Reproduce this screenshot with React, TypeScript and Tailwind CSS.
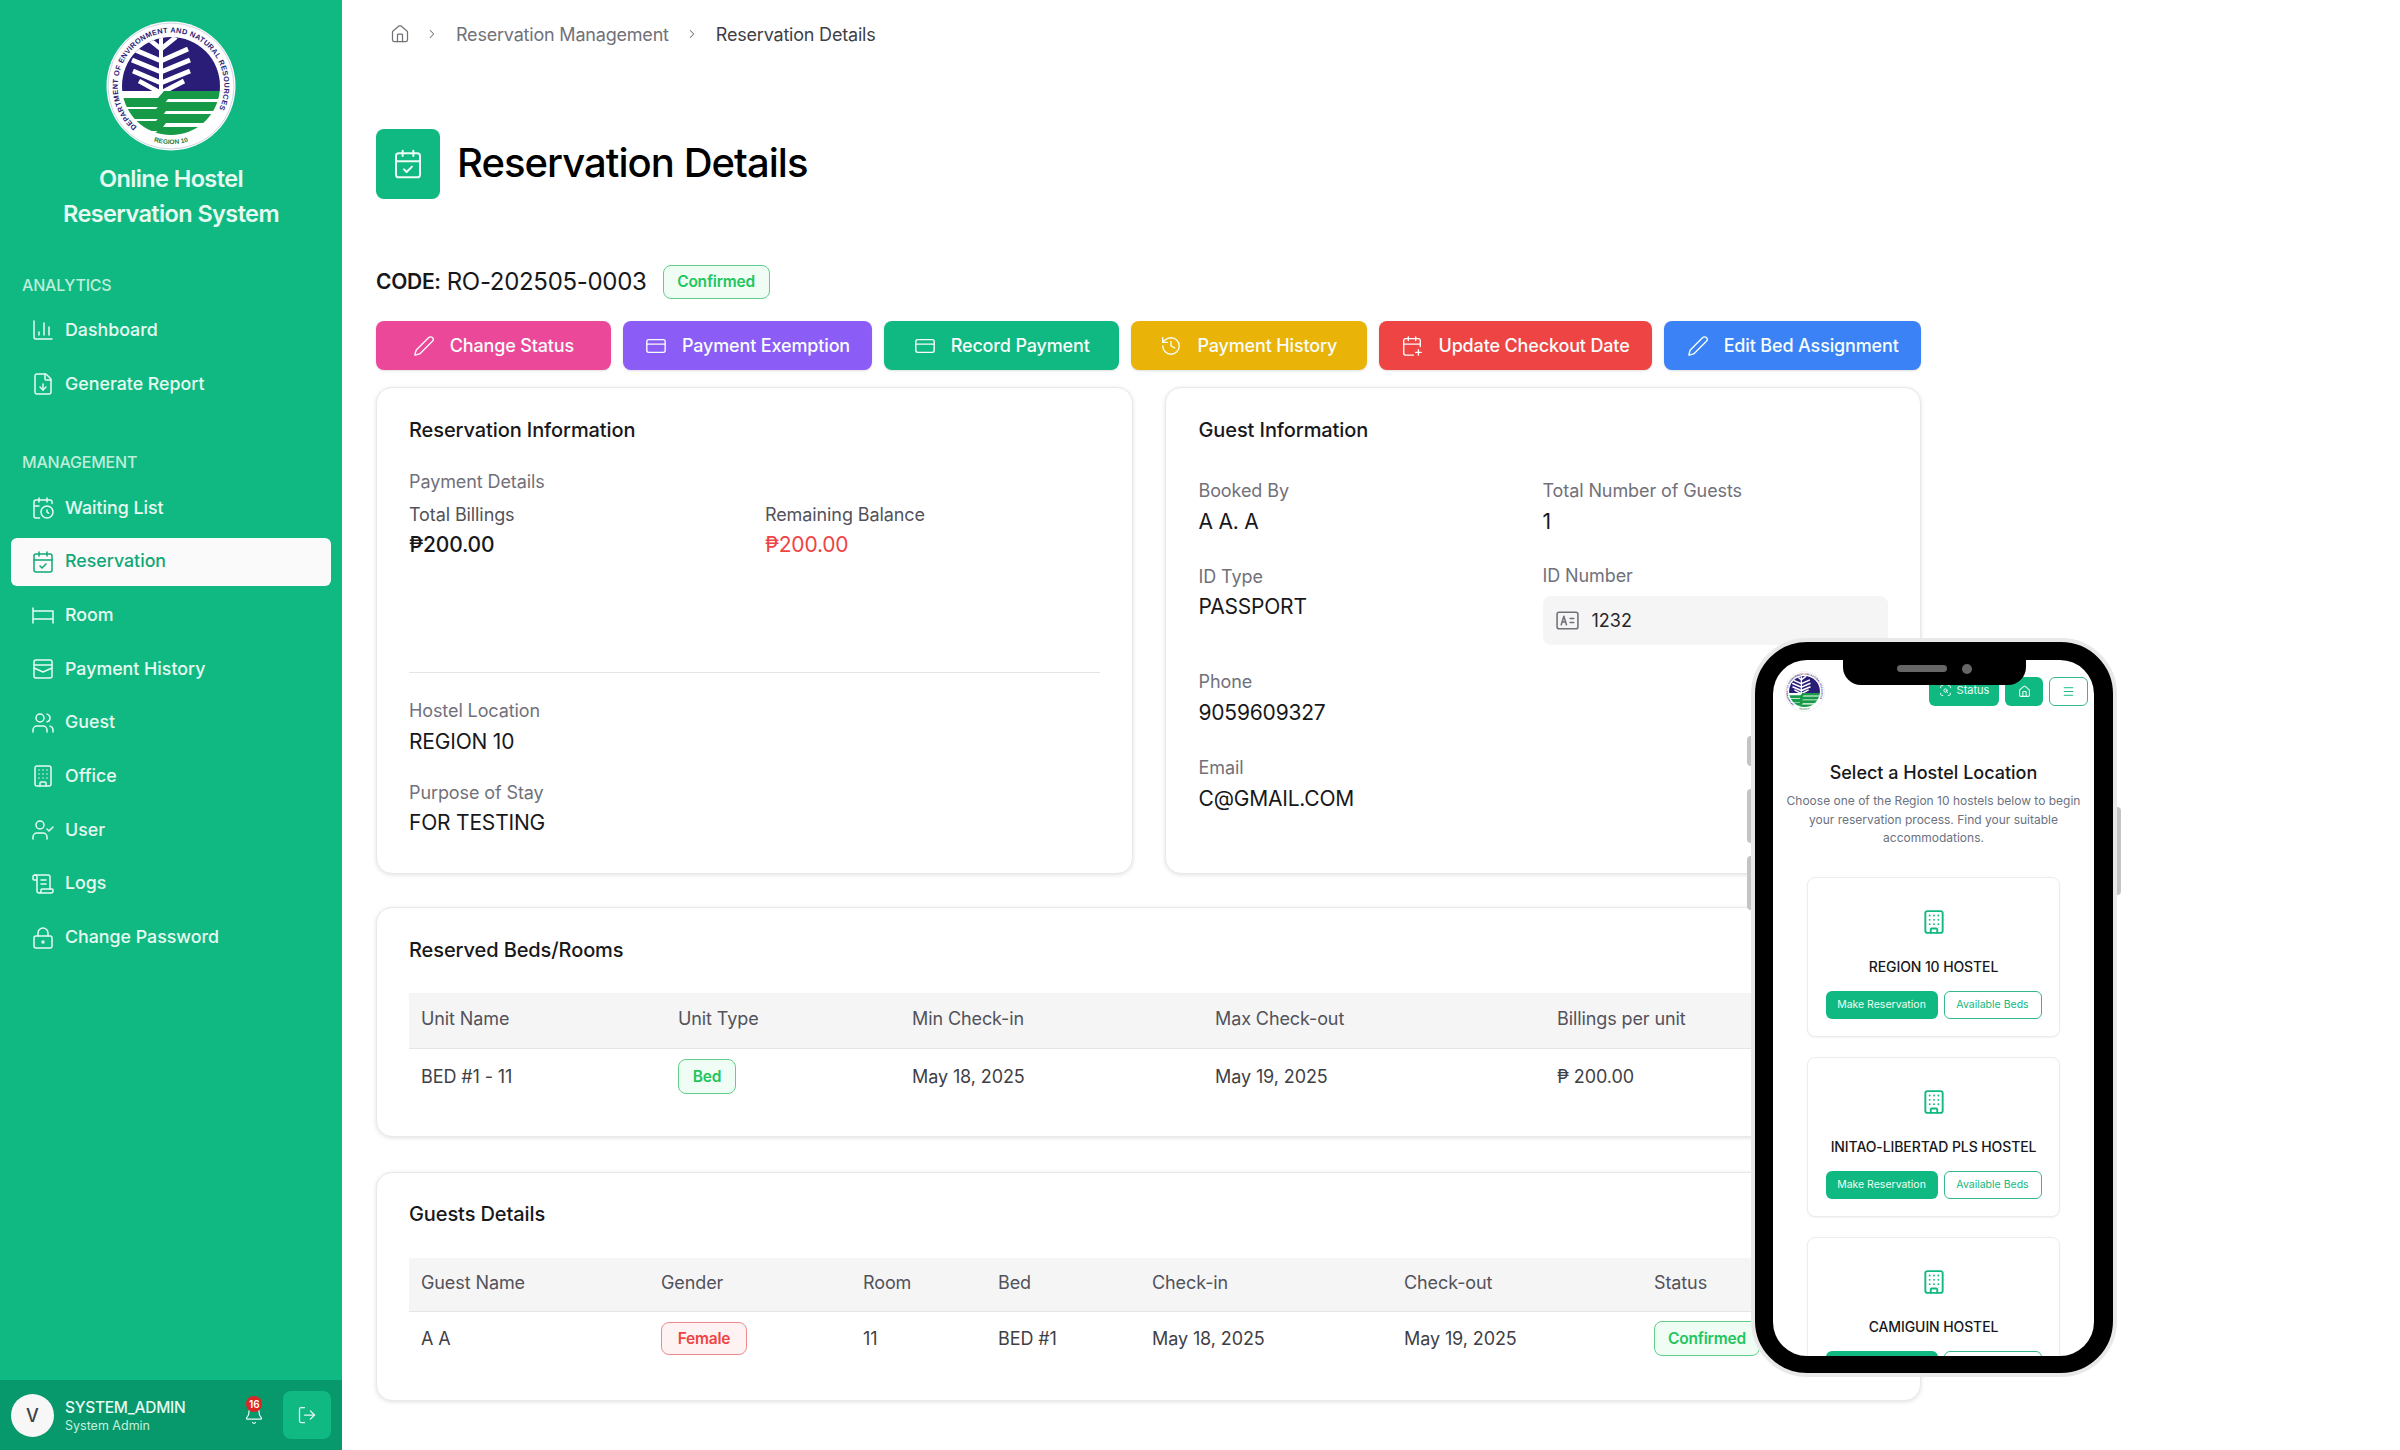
import React from "react";
import {
  ChartColumn, FileDown, CalendarClock, CalendarCheck, Users, Building, UserCheck, ScrollText, LockKeyhole,
  Bell, LogOut, House, ChevronRight, Pen, CreditCard, History, CalendarPlus, ScanSearch, Menu,
} from "lucide-react";

function Logo({ className, id }: { className: string; id: string }) {
  const bands = [
    "M10 77H52L58 70H120V78H62L56 86H10Z",
    "M10 88H50L56 81H120V90H60L54 98H10Z",
    "M10 100H50L56 93H120V102H60L54 110H10Z",
    "M40 120L56 106H120V116H62L52 124Z",
  ];
  const chevrons = [
    { j: 28, l: 40, r: 70 },
    { j: 40, l: 27, r: 82 },
    { j: 51, l: 26, r: 84 },
    { j: 62, l: 27, r: 84 },
    { j: 72, l: 33, r: 78 },
  ];
  return (
    <svg viewBox="0 0 130 130" className={className}>
      <defs>
        <clipPath id={`${id}-c`}><circle cx="65" cy="65" r="49" /></clipPath>
        <path id={`${id}-t`} d="M31 106A53.300 53.300 0 1 1 99 106" />
        <path id={`${id}-b`} d="M37 116A59 59 0 0 0 93 116" />
      </defs>
      <circle cx="65" cy="65" r="64.500" fill="#ffffff" />
      <circle cx="65" cy="65" r="63" fill="none" stroke="#cfd3e6" strokeWidth="1" />
      <text fontSize="7.400" fontWeight="700" fill="#2a1d78" fontFamily="Liberation Sans, sans-serif" letterSpacing="0.3">
        <textPath href={`#${id}-t`} startOffset="0">DEPARTMENT OF ENVIRONMENT AND NATURAL RESOURCES</textPath>
      </text>
      <text fontSize="6.500" fontWeight="700" fill="#1a7a3c" fontFamily="Liberation Sans, sans-serif" textAnchor="middle">
        <textPath href={`#${id}-b`} startOffset="50%">REGION 10</textPath>
      </text>
      <g clipPath={`url(#${id}-c)`}>
        <rect x="0" y="0" width="130" height="70" fill="#2a1d78" />
        <g stroke="#ffffff" strokeWidth="4.800" fill="none">
          {chevrons.map((c) => (
            <path key={c.j} d={`M${c.l} ${c.j - 12}L55 ${c.j}L${c.r} ${c.j - 12}`} />
          ))}
          <path d="M55 12V72" strokeWidth="4" />
        </g>
        <rect x="0" y="70" width="130" height="60" fill="#ffffff" />
        {bands.map((d) => <path key={d} d={d} fill="#169a48" />)}
      </g>
    </svg>
  );
}

function BedIcon({ className }: { className?: string }) {
  return (
    <svg viewBox="0 0 24 24" fill="none" stroke="currentColor" strokeWidth="1.5" strokeLinecap="round" strokeLinejoin="round" className={className}>
      <path d="M2 5v15M2 8h20v12M2 16h20" />
    </svg>
  );
}

function PayIcon({ className }: { className?: string }) {
  return (
    <svg viewBox="0 0 24 24" fill="none" stroke="currentColor" strokeWidth="1.5" strokeLinecap="round" strokeLinejoin="round" className={className}>
      <rect x="3" y="3" width="18" height="18" rx="2" />
      <path d="M3 8h18M3 11l9 4 9-4" />
    </svg>
  );
}

function IdIcon({ className }: { className?: string }) {
  return (
    <svg viewBox="0 0 24 24" fill="none" stroke="currentColor" strokeWidth="1.5" strokeLinecap="round" strokeLinejoin="round" className={className}>
      <rect x="2" y="4" width="20" height="16" rx="2" />
      <path d="M6 16l2.500-8 2.500 8M7 13.500h3M14.500 10H18M14.500 14H18" />
    </svg>
  );
}

const analytics = [
  { label: "Dashboard", Icon: ChartColumn },
  { label: "Generate Report", Icon: FileDown },
];
const management = [
  { label: "Waiting List", Icon: CalendarClock },
  { label: "Reservation", Icon: CalendarCheck, active: true },
  { label: "Room", Icon: BedIcon },
  { label: "Payment History", Icon: PayIcon },
  { label: "Guest", Icon: Users },
  { label: "Office", Icon: Building },
  { label: "User", Icon: UserCheck },
  { label: "Logs", Icon: ScrollText },
  { label: "Change Password", Icon: LockKeyhole },
];

function NavItem({ label, Icon, active }: { label: string; Icon: any; active?: boolean }) {
  return (
    <div className={`flex h-12 items-center gap-[10px] rounded-md pl-[20px] text-[17.800px] font-medium ${active ? "bg-[#fafafa] text-[#10a877]" : "text-[#e6faf2]"}`}>
      <Icon className="size-[24px]" strokeWidth={1.5} />
      <span>{label}</span>
    </div>
  );
}

function Sidebar() {
  return (
    <aside className="flex h-full w-[342px] shrink-0 flex-col bg-[#10b981]">
      <div className="flex flex-1 flex-col px-[11px]">
        <Logo id="side" className="mx-auto mt-[21px] size-[130px]" />
        <div className="mt-[10px] text-center text-[23.500px] font-semibold leading-[35px] tracking-[-0.6px] text-[#e6faf2]">
          Online Hostel<br />Reservation System
        </div>
        <div className="mt-[44px] pl-[11px] text-[16px] font-medium leading-[20px] tracking-[-0.2px] text-[#bdeedb]">ANALYTICS</div>
        <div className="mt-[11px] flex flex-col gap-[6px]">
          {analytics.map((n) => <NavItem key={n.label} {...n} />)}
        </div>
        <div className="mt-[44px] pl-[11px] text-[16px] font-medium leading-[20px] tracking-[-0.2px] text-[#bdeedb]">MANAGEMENT</div>
        <div className="mt-[12px] flex flex-col gap-[5.700px]">
          {management.map((n) => <NavItem key={n.label} {...n} />)}
        </div>
      </div>
      <div className="flex h-[70px] items-center bg-[#07986c] pl-[11px] pr-[11px]">
        <div className="flex size-[43px] items-center justify-center rounded-full bg-[#f7f7f7] text-[18px] font-medium text-[#3f3f46]">V</div>
        <div className="ml-[11px] flex flex-col">
          <span className="text-[15.500px] font-medium leading-[20px] tracking-[-0.3px] text-[#e6faf2]">SYSTEM_ADMIN</span>
          <span className="text-[12.500px] leading-[15px] text-[#c5f0df]">System Admin</span>
        </div>
        <div className="relative ml-[59px] text-[#e6faf2]">
          <Bell className="size-[20px]" strokeWidth={1.5} />
          <span className="absolute -top-[9px] left-[2px] flex size-[16px] items-center justify-center rounded-full bg-[#dc2626] text-[10px] font-semibold text-white">16</span>
        </div>
        <div className="ml-auto flex size-[48px] items-center justify-center rounded-lg bg-[#10b981] text-[#e6faf2]">
          <LogOut className="size-[20px]" strokeWidth={1.5} />
        </div>
      </div>
    </aside>
  );
}

const actions = [
  { label: "Change Status", Icon: Pen, cls: "bg-[#ec4899] w-[235px]" },
  { label: "Payment Exemption", Icon: CreditCard, cls: "bg-[#8b5cf6] w-[250px]" },
  { label: "Record Payment", Icon: CreditCard, cls: "bg-[#10b981] w-[235px]" },
  { label: "Payment History", Icon: History, cls: "bg-[#eab308] w-[236px]" },
  { label: "Update Checkout Date", Icon: CalendarPlus, cls: "bg-[#ef4444] w-[274px]" },
  { label: "Edit Bed Assignment", Icon: Pen, cls: "bg-[#3b82f6] w-[257px]" },
];

function Badge({ children, tone, className }: { children: React.ReactNode; tone: "green" | "red"; className: string }) {
  const c = tone === "green" ? "border-[#5fcf8a] bg-[#f0fdf4] text-[#22c55e]" : "border-[#f08a8a] bg-[#fef2f2] text-[#ef4444]";
  return <span className={`inline-flex items-center justify-center rounded-lg border text-[15.500px] font-semibold tracking-[-0.2px] ${c} ${className}`}>{children}</span>;
}

function Label({ children, className = "" }: { children: React.ReactNode; className?: string }) {
  return <div className={`text-[18px] leading-[24px] tracking-[-0.1px] text-[#52525b] ${className}`}>{children}</div>;
}
function Value({ children, className = "" }: { children: React.ReactNode; className?: string }) {
  return <div className={`text-[21px] leading-[30px] tracking-[-0.2px] text-[#18181b] ${className}`}>{children}</div>;
}
function CardTitle({ children }: { children: React.ReactNode }) {
  return <h2 className="text-[20px] font-medium leading-[28px] tracking-[-0.1px] text-[#18181b]">{children}</h2>;
}
const card = "rounded-2xl border border-[#e9e9e9] bg-white shadow-[0_1px_4px_rgba(0,0,0,0.12)]";
const th = "text-left font-normal text-[18px] tracking-[-0.1px] text-[#52525b] pl-[12px] pb-[3px]";
const td = "text-left font-normal text-[18px] tracking-[-0.1px] text-[#3f3f46] pl-[12px]";

function ReservationCard() {
  return (
    <section className={`${card} flex flex-col px-[32px] pt-[28px]`}>
      <CardTitle>Reservation Information</CardTitle>
      <Label className="mt-[26px] !text-[#71717a]">Payment Details</Label>
      <div className="mt-[9px] grid w-[712px] grid-cols-[356px_1fr]">
        <div>
          <Label>Total Billings</Label>
          <Value className="mt-[3px] font-medium">₱200.00</Value>
        </div>
        <div>
          <Label>Remaining Balance</Label>
          <Value className="mt-[3px] !text-[#ef4444]">₱200.00</Value>
        </div>
      </div>
      <div className="mt-[112px] h-px bg-[#e5e5e5]" />
      <Label className="mt-[26px] !text-[#71717a]">Hostel Location</Label>
      <Value className="mt-[4px]">REGION 10</Value>
      <Label className="mt-[24px] !text-[#71717a]">Purpose of Stay</Label>
      <Value className="mt-[3px]">FOR TESTING</Value>
    </section>
  );
}

function GuestCard() {
  return (
    <section className={`${card} pl-[33px] pr-[32px] pt-[28px]`}>
      <CardTitle>Guest Information</CardTitle>
      <div className="mt-[35px] grid grid-cols-[344px_1fr]">
        <div>
          <Label className="!text-[#71717a]">Booked By</Label>
          <Value className="mt-[4px]">A A. A</Value>
        </div>
        <div>
          <Label className="!text-[#71717a]">Total Number of Guests</Label>
          <Value className="mt-[4px]">1</Value>
        </div>
        <div className="mt-[28px]">
          <Label className="!text-[#71717a]">ID Type</Label>
          <Value className="mt-[3px]">PASSPORT</Value>
        </div>
        <div className="mt-[27px]">
          <Label className="!text-[#71717a]">ID Number</Label>
          <div className="mt-[8px] flex h-[49px] items-center gap-[12px] rounded-lg bg-[#f5f5f5] pl-[12px] text-[18px] text-[#27272a]">
            <IdIcon className="size-[25px] text-[#71717a]" />
            <span>1232</span>
          </div>
        </div>
        <div className="col-span-2 mt-[25px]">
          <Label className="!text-[#71717a]">Phone</Label>
          <Value className="mt-[4px]">9059609327</Value>
        </div>
        <div className="col-span-2 mt-[28px]">
          <Label className="!text-[#71717a]">Email</Label>
          <Value className="mt-[4px]">C@GMAIL.COM</Value>
        </div>
      </div>
    </section>
  );
}

function ReservedCard() {
  const widths = ["w-[257px]", "w-[234px]", "w-[303px]", "w-[342px]", "w-[343px]"];
  return (
    <section className={`${card} mt-[33px] h-[230px] px-[32px] pt-[28px]`}>
      <CardTitle>Reserved Beds/Rooms</CardTitle>
      <table className="mt-[29px] w-full table-fixed border-collapse">
        <colgroup>{widths.map((w) => <col key={w} className={w} />)}</colgroup>
        <thead>
          <tr className="h-[55px] border-b border-[#e5e5e5] bg-[#f5f5f5]">
            {["Unit Name", "Unit Type", "Min Check-in", "Max Check-out", "Billings per unit"].map((h) => <th key={h} className={th}>{h}</th>)}
          </tr>
        </thead>
        <tbody>
          <tr className="h-[57px]">
            <td className={td}>BED #1 - 11</td>
            <td className={td}><Badge tone="green" className="h-[35px] w-[58px]">Bed</Badge></td>
            <td className={td}>May 18, 2025</td>
            <td className={td}>May 19, 2025</td>
            <td className={td}>₱ 200.00</td>
          </tr>
        </tbody>
      </table>
    </section>
  );
}

function GuestsCard() {
  const widths = ["w-[240px]", "w-[202px]", "w-[135px]", "w-[154px]", "w-[252px]", "w-[250px]", "w-[246px]"];
  return (
    <section className={`${card} mt-[35px] h-[229px] px-[32px] pt-[27px]`}>
      <CardTitle>Guests Details</CardTitle>
      <table className="mt-[30px] w-full table-fixed border-collapse">
        <colgroup>{widths.map((w, i) => <col key={i} className={w} />)}</colgroup>
        <thead>
          <tr className="h-[53px] border-b border-[#e5e5e5] bg-[#f5f5f5]">
            {["Guest Name", "Gender", "Room", "Bed", "Check-in", "Check-out", "Status"].map((h) => <th key={h} className={th}>{h}</th>)}
          </tr>
        </thead>
        <tbody>
          <tr className="h-[54px]">
            <td className={td}>A A</td>
            <td className={td}><Badge tone="red" className="h-[33px] w-[86px]">Female</Badge></td>
            <td className={td}>11</td>
            <td className={td}>BED #1</td>
            <td className={td}>May 18, 2025</td>
            <td className={td}>May 19, 2025</td>
            <td className={td}><Badge tone="green" className="h-[35px] w-[106px]">Confirmed</Badge></td>
          </tr>
        </tbody>
      </table>
    </section>
  );
}

function HostelCard({ name }: { name: string }) {
  return (
    <div className="flex h-[160px] w-[253px] shrink-0 flex-col items-center rounded-lg border border-[#ececec] bg-white shadow-[0_1px_2px_rgba(0,0,0,0.05)]">
      <Building className="mt-[31px] size-[26px] text-[#10b981]" strokeWidth={1.75} />
      <div className="mt-[22px] text-[14px] font-medium leading-[20px] tracking-[-0.1px] text-[#18181b]">{name}</div>
      <div className="mt-[14px] flex gap-[6px]">
        <div className="flex h-[28px] w-[112px] items-center justify-center rounded-md bg-[#10b981] text-[10.500px] text-[#ecfdf5]">Make Reservation</div>
        <div className="flex h-[28px] w-[98px] items-center justify-center rounded-md border border-[#34b98e] bg-white text-[10.500px] text-[#10b981]">Available Beds</div>
      </div>
    </div>
  );
}

function Phone() {
  return (
    <div className="absolute left-[1751px] top-[638px] h-[739px] w-[366px]">
      <div className="absolute -left-[4px] top-[98px] h-[30px] w-[4px] rounded-l bg-[#c4c4c4]" />
      <div className="absolute -left-[4px] top-[151px] h-[54px] w-[4px] rounded-l bg-[#c4c4c4]" />
      <div className="absolute -left-[4px] top-[218px] h-[54px] w-[4px] rounded-l bg-[#c4c4c4]" />
      <div className="absolute -right-[4px] top-[169px] h-[88px] w-[4px] rounded-r bg-[#c4c4c4]" />
      <div className="h-full w-full rounded-[56px] border-[4px] border-[#e8e8e8] bg-black pb-[17px] pl-[18px] pr-[19px] pt-[18px]">
        <div className="relative h-full w-full overflow-hidden rounded-[34px] bg-white">
          <div className="absolute left-[70px] top-0 flex h-[25px] w-[183px] items-center justify-center gap-[15px] rounded-b-[18px] bg-black pb-[8px]">
            <span className="h-[7px] w-[50px] rounded-full bg-[#666666]" />
            <span className="size-[10px] rounded-full bg-[#666666]" />
          </div>
          <div className="flex items-start pl-[11px] pr-[6px] pt-[11px]">
            <Logo id="ph" className="size-[41px]" />
            <div className="ml-auto flex gap-[6px] pt-[6px]">
              <div className="flex h-[29px] w-[70px] items-center justify-center gap-[5px] rounded-md bg-[#10b981] pb-[3px] text-[11px] text-[#ecfdf5]">
                <ScanSearch className="size-[13px]" strokeWidth={1.75} />
                <span>Status</span>
              </div>
              <div className="flex h-[29px] w-[38px] items-center justify-center rounded-md bg-[#10b981] text-[#ecfdf5]">
                <House className="size-[13px]" strokeWidth={2} />
              </div>
              <div className="flex h-[29px] w-[39px] items-center justify-center rounded-md border border-[#34b98e] text-[#10b981]">
                <Menu className="size-[13px]" strokeWidth={1.75} />
              </div>
            </div>
          </div>
          <h3 className="mt-[48px] text-center text-[18px] font-medium leading-[26px] text-[#18181b]">Select a Hostel Location</h3>
          <p className="mx-auto mt-[6px] w-[305px] text-center text-[12px] leading-[18.700px] text-[#6b7280]">
            Choose one of the Region 10 hostels below to begin your reservation process. Find your suitable accommodations.
          </p>
          <div className="mt-[29px] flex flex-col items-center gap-[20px]">
            <HostelCard name="REGION 10 HOSTEL" />
            <HostelCard name="INITAO-LIBERTAD PLS HOSTEL" />
            <HostelCard name="CAMIGUIN HOSTEL" />
          </div>
        </div>
      </div>
    </div>
  );
}

export default function App() {
  return (
    <div className="relative flex h-[1450px] w-[2400px] overflow-hidden bg-white font-[Inter,sans-serif]">
      <Sidebar />
      <main className="w-[1579px] pl-[34px]">
        <div className="w-[1545px]">
          <nav className="flex h-[68px] items-center text-[18px] tracking-[-0.2px]">
            <House className="ml-[14px] size-[20px] text-[#71717a]" strokeWidth={1.5} />
            <ChevronRight className="ml-[15px] size-[14px] text-[#71717a]" strokeWidth={1.75} />
            <span className="ml-[17px] text-[#71717a]">Reservation Management</span>
            <ChevronRight className="ml-[16px] size-[14px] text-[#71717a]" strokeWidth={1.75} />
            <span className="ml-[17px] text-[#3f3f46]">Reservation Details</span>
          </nav>
          <div className="mt-[61px] flex h-[70px] items-center gap-[17px]">
            <div className="flex h-[70px] w-[64px] items-center justify-center rounded-lg bg-[#10b981] text-[#ecfdf5]">
              <CalendarCheck className="size-[32px]" strokeWidth={1.5} />
            </div>
            <h1 className="-mt-[2px] text-[40px] font-medium tracking-[-0.95px] text-black">Reservation Details</h1>
          </div>
          <div className="mt-[66px] flex h-[34px] items-center">
            <span className="text-[21px] font-semibold tracking-[-0.3px] text-[#18181b]">CODE:</span>
            <span className="ml-[6px] text-[24px] tracking-[-0.3px] text-[#18181b]">RO-202505-0003</span>
            <Badge tone="green" className="ml-[16px] h-[34px] w-[107px]">Confirmed</Badge>
          </div>
          <div className="mt-[22px] flex gap-[12px]">
            {actions.map(({ label, Icon, cls }) => (
              <div key={label} className={`flex h-[49px] items-center justify-center gap-[15px] rounded-lg text-[18px] font-medium tracking-[-0.15px] text-[#f7fdfa] shadow-sm ${cls}`}>
                <Icon className="size-[22px]" strokeWidth={1.5} />
                <span>{label}</span>
              </div>
            ))}
          </div>
          <div className="mt-[17px] grid h-[487px] grid-cols-2 gap-[32px]">
            <ReservationCard />
            <GuestCard />
          </div>
          <ReservedCard />
          <GuestsCard />
        </div>
      </main>
      <Phone />
    </div>
  );
}
